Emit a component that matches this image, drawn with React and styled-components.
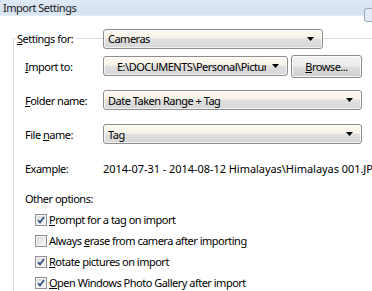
import React from "react";
import styled, { createGlobalStyle } from "styled-components";

const GlobalStyle = createGlobalStyle`
  html, body {
    margin: 0;
    padding: 0;
    background: #fff;
  }
  body {
    font-family: "Noto Sans", "Open Sans", sans-serif;
    font-size: 11px;
    letter-spacing: -0.5px;
    color: #000;
  }
`;

const LINE = "#d5dfe5";

function Mn({ children }) {
  return <Key>{children}</Key>;
}

function Arrow() {
  return (
    <ArrowIcon width="7" height="4" viewBox="0 0 7 4">
      <path d="M0 0h7L3.5 4z" fill="#000" />
    </ArrowIcon>
  );
}

function Check({ checked, children }) {
  return (
    <CheckRow>
      <Box>
        {checked && (
          <svg width="8" height="8" viewBox="0 0 8 8">
            <path
              d="M1 4.2 L3 6.4 L7 1"
              fill="none"
              stroke="#2c4b85"
              strokeWidth="1.6"
            />
          </svg>
        )}
      </Box>
      <CheckText>{children}</CheckText>
    </CheckRow>
  );
}

export default function App() {
  return (
    <>
      <GlobalStyle />
      <Window>
        <TitleBar>
          Import Settings
          <CloseButton />
        </TitleBar>
        <Group>
          <Header>
            <Legend>
              <HLine $w={4} />
              <LegendText>
                <Mn>S</Mn>ettings for:
              </LegendText>
              <HLine />
            </Legend>
            <Combo $w={220}>
              <ComboText>Cameras</ComboText>
              <Arrow />
            </Combo>
            <HLine />
          </Header>

          <Row>
            <Label>
              <Mn>I</Mn>mport to:
            </Label>
            <Pair>
              <Combo $w={185}>
                <ComboText $indent={9}>E:\DOCUMENTS\Personal\Pictures</ComboText>
                <Arrow />
              </Combo>
              <Button>
                <Mn>B</Mn>rowse...
              </Button>
            </Pair>
          </Row>

          <Row>
            <Label>
              <Mn>F</Mn>older name:
            </Label>
            <Combo>
              <ComboText>Date Taken Range + Tag</ComboText>
              <Arrow />
            </Combo>
          </Row>

          <Row>
            <Label>
              File <Mn>n</Mn>ame:
            </Label>
            <Combo>
              <ComboText>Tag</ComboText>
              <Arrow />
            </Combo>
          </Row>

          <Row>
            <Label>Example:</Label>
            <Value>2014-07-31 - 2014-08-12 Himalayas\Himalayas 001.JPG</Value>
          </Row>

          <Options>
            <OptionsTitle>Other options:</OptionsTitle>
            <Check checked>
              <Mn>P</Mn>rompt for a tag on import
            </Check>
            <Check>
              Always <Mn>e</Mn>rase from camera after importing
            </Check>
            <Check checked>
              <Mn>R</Mn>otate pictures on import
            </Check>
            <Check checked>
              <Mn>O</Mn>pen Windows Photo Gallery after import
            </Check>
          </Options>
        </Group>
      </Window>
    </>
  );
}

const Window = styled.div`
  width: 372px;
  height: 291px;
  overflow: hidden;
  background: #fff;
  display: flex;
  flex-direction: column;
`;

const TitleBar = styled.div`
  position: relative;
  flex: none;
  height: 16px;
  line-height: 15px;
  padding-left: 3px;
  color: #1b1b1b;
  background: linear-gradient(#dfe9f5, #d4e1ef 80%, #e6edf6);
`;

const CloseButton = styled.div`
  position: absolute;
  top: 8px;
  right: -14px;
  width: 20px;
  height: 12px;
  border: 1px solid #9aa8ba;
  border-radius: 3px;
  background: #e4ebf4;
`;

const Group = styled.div`
  flex: 1;
  margin: 22px 0 0 13px;
  border-left: 1px solid ${LINE};
  display: flex;
  flex-direction: column;
`;

const Header = styled.div`
  display: flex;
  align-items: center;
  height: 21px;
  margin: -10px 0 0 -1px;
`;

const Legend = styled.div`
  width: 90px;
  flex: none;
  display: flex;
  align-items: center;
`;

const LegendText = styled.span`
  padding: 0 4px 0 0;
  white-space: nowrap;
`;

const HLine = styled.div`
  height: 1px;
  background: ${LINE};
  flex: ${(p) => (p.$w ? "none" : "1")};
  width: ${(p) => (p.$w ? `${p.$w}px` : "auto")};
`;

const Row = styled.div`
  display: grid;
  grid-template-columns: 78px 1fr;
  align-items: center;
  height: 34px;
  padding: 0 10px 0 11px;
  flex: none;
`;

const Label = styled.span`
  white-space: nowrap;
`;

const Pair = styled.div`
  display: flex;
  align-items: center;
  gap: 3px;
`;

const Combo = styled.div`
  box-sizing: border-box;
  height: 20px;
  width: ${(p) => (p.$w ? `${p.$w}px` : "100%")};
  flex: none;
  display: flex;
  align-items: center;
  border: 1px solid #8d8d8d;
  border-radius: 3px;
  box-shadow: inset 0 0 0 1px rgba(255, 255, 255, 0.7);
  background: linear-gradient(#fbf8f0 0%, #f7f3e8 45%, #e0e0e0 50%, #d6d6d6 100%);
  padding: 0 8px 0 4px;
  overflow: hidden;
`;

const ComboText = styled.span`
  flex: 1;
  min-width: 0;
  overflow: hidden;
  white-space: nowrap;
  padding-left: ${(p) => p.$indent || 0}px;
`;

const ArrowIcon = styled.svg`
  flex: none;
  margin-left: 6px;
`;

const Button = styled.div`
  box-sizing: border-box;
  flex: 1;
  height: 23px;
  display: flex;
  align-items: center;
  justify-content: center;
  border: 1px solid #8a8a8a;
  border-radius: 3px;
  box-shadow: inset 0 0 0 1px rgba(255, 255, 255, 0.8);
  background: linear-gradient(#f3f3f3 0%, #ebebeb 48%, #dddddd 52%, #cfcfcf 100%);
`;

const Value = styled.span`
  white-space: nowrap;
  overflow: hidden;
  margin-right: -10px;
  letter-spacing: -0.05px;
`;

const Key = styled.span`
  text-decoration: underline;
  text-underline-offset: 1px;
`;

const Options = styled.div`
  display: flex;
  flex-direction: column;
  padding-left: 11px;
`;

const OptionsTitle = styled.div`
  height: 24px;
  line-height: 28px;
`;

const CheckRow = styled.div`
  display: flex;
  align-items: center;
  height: 21px;
  padding-left: 10px;
`;

const Box = styled.div`
  box-sizing: border-box;
  width: 12px;
  height: 12px;
  flex: none;
  display: flex;
  align-items: center;
  justify-content: center;
  border: 1px solid #8f8f8f;
  box-shadow: inset 0 0 0 1px #f4f4f4;
  background: linear-gradient(135deg, #d8d8d8, #f8f8f8);
  margin-right: 2px;
`;

const CheckText = styled.span`
  white-space: nowrap;
`;
